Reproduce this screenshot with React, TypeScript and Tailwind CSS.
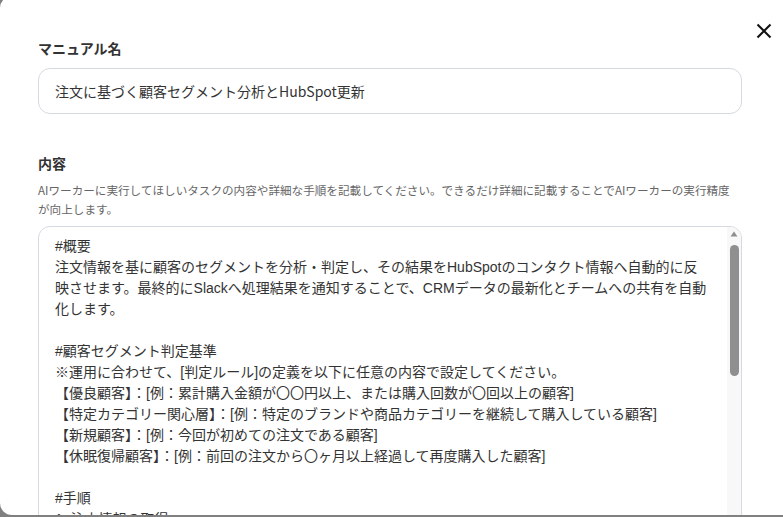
import React from "react";

const manualText = `#概要
注文情報を基に顧客のセグメントを分析・判定し、その結果をHubSpotのコンタクト情報へ自動的に反映させます。最終的にSlackへ処理結果を通知することで、CRMデータの最新化とチームへの共有を自動化します。

#顧客セグメント判定基準
※運用に合わせて、[判定ルール]の定義を以下に任意の内容で設定してください。
【優良顧客】：[例：累計購入金額が〇〇円以上、または購入回数が〇回以上の顧客]
【特定カテゴリー関心層】：[例：特定のブランドや商品カテゴリーを継続して購入している顧客]
【新規顧客】：[例：今回が初めての注文である顧客]
【休眠復帰顧客】：[例：前回の注文から〇ヶ月以上経過して再度購入した顧客]

#手順
1. 注文情報の取得
・トリガーで受け取った注文データから、顧客のメールアドレス、注文日時、注文金額、購入商品を取得します。
2. 顧客情報の確認
・HubSpotで該当するメールアドレスのコンタクトを検索します。
・コンタクトが存在しない場合は、新規コンタクトとして作成します。
3. 購入履歴の集計
・過去の注文情報を参照し、累計購入金額と購入回数を集計します。
・前回の注文日時から今回の注文までの経過期間を算出します。
4. セグメントの判定
・上記の判定基準に沿って、顧客がどのセグメントに該当するかを判定します。
・複数のセグメントに該当する場合は、上から順に優先して1つを選択します。
5. HubSpotの更新
・判定したセグメントを、コンタクトのプロパティ「顧客セグメント」に反映します。
・累計購入金額、購入回数、最終購入日も合わせて更新します。
6. Slackへの通知
・処理結果を指定のSlackチャンネルへ通知します。
・通知には顧客名、判定したセグメント、更新内容を含めてください。

#注意事項
・判定に必要な情報が不足している場合は、処理を中断せずにその旨をSlackへ通知してください。
・個人情報の取り扱いには十分注意し、通知に不要な情報を含めないでください。
・HubSpotの更新に失敗した場合は、エラー内容を記録して再実行してください。
`;

const CloseIcon = () => (
  <svg width="16" height="16" viewBox="0 0 16 16" fill="none">
    <path d="M1.5 1.5L14.5 14.5M14.5 1.5L1.5 14.5" stroke="#111" strokeWidth="2" />
  </svg>
);

const ScrollBar = () => (
  <div className="pointer-events-none absolute bottom-px right-px top-px flex w-[14px] flex-col items-center rounded-tr-[11px] bg-[#f8f8f8]">
    <svg width="8" height="6" viewBox="0 0 8 6" className="mt-[4px]">
      <path d="M4 0.5L7.5 5.5H0.5Z" fill="#8e8e8e" />
    </svg>
    <div className="mt-[8px] h-[131px] w-[9px] rounded-full bg-[#8f8f8f]" />
  </div>
);

export default function App() {
  return (
    <div className="h-[517px] w-[783px] overflow-hidden bg-[#808080]">
      <div
        className="relative mt-[-4px] h-[519px] w-[790px] overflow-hidden rounded-l-xl bg-white px-[38px] pt-[42px] text-[#333]"
        style={{ fontFamily: '"Noto Sans CJK JP", sans-serif' }}
      >
        <button className="absolute left-[754px] top-[25px] p-0.5">
          <CloseIcon />
        </button>

        <div className="w-[704px]">
          <label className="block text-sm font-bold leading-5">マニュアル名</label>
          <input
            readOnly
            value="注文に基づく顧客セグメント分析とHubSpot更新"
            className="mt-2.5 h-[46px] w-full rounded-xl border border-[#d5d9e0] px-4 text-sm text-[#333] outline-none"
            style={{ fontFamily: '"Noto Sans CJK JP", sans-serif' }}
          />

          <label className="mt-[39px] block text-sm font-bold leading-5">内容</label>
          <p className="mr-[10px] mt-2 text-[11.6px] leading-[19px] text-[#666]">
            AIワーカーに実行してほしいタスクの内容や詳細な手順を記載してください。できるだけ詳細に記載することでAIワーカーの実行精度が向上します。
          </p>

          <div className="relative mt-[7px]">
            <textarea
              readOnly
              value={manualText}
              className="block h-[420px] w-full resize-none rounded-xl border border-[#d5d9e0] py-[9px] pl-4 pr-[30px] text-sm leading-[21px] text-[#333] outline-none [scrollbar-width:none]"
              style={{ fontFamily: '"Liberation Sans", "Noto Sans CJK JP", sans-serif' }}
            />
            <ScrollBar />
          </div>
        </div>
      </div>
    </div>
  );
}
